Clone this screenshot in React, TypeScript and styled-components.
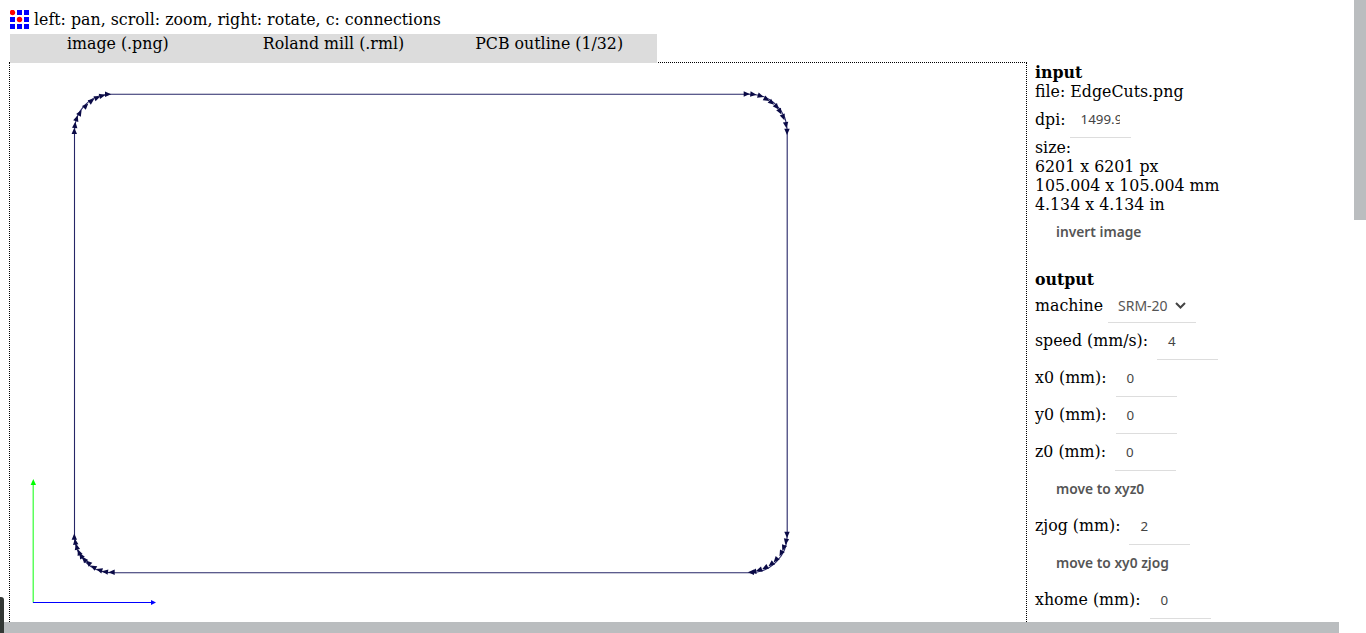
import React from 'react';
import styled, { createGlobalStyle } from 'styled-components';

const GlobalStyle = createGlobalStyle`
  html, body {
    margin: 0;
    height: 633px;
    overflow: hidden;
    background: #fff;
    font-family: "DejaVu Serif", serif;
    font-size: 15.8px;
    line-height: 18.7px;
    color: #000;
  }
`;

const Page = styled.div`
  width: 1366px;
  height: 633px;
  padding: 10px 0 0 10px;
  box-sizing: border-box;
  overflow: hidden;
`;

const Hint = styled.div`
  display: flex;
  align-items: flex-start;
  gap: 5px;
  height: 19px;
  margin-bottom: 5px;
`;

const HintText = styled.span`
  padding-top: 0.5px;
`;

const Tabs = styled.div`
  position: relative;
  display: grid;
  grid-template-columns: repeat(3, 215.67px);
  width: 647px;
  height: 29px;
  background: #dcdcdc;
`;

const Tab = styled.div`
  padding-top: 0.5px;
  text-align: center;
`;

const Workspace = styled.div`
  display: flex;
  align-items: flex-start;
`;

const Stage = styled.div`
  width: 1016px;
  height: 570px;
  flex: none;
  border-left: 1px dotted #000;
  border-right: 1px dotted #000;
  margin-top: -1px;
  margin-left: -1px;
  background-image: linear-gradient(to right, #000 50%, transparent 50%);
  background-size: 2px 1px;
  background-repeat: repeat-x;
`;

const Drawing = styled.svg`
  display: block;
`;

const Side = styled.div`
  margin-left: 8px;
  padding-top: 1px;
  width: 310px;
  flex: none;
`;

const Group = styled.div`
  margin-bottom: 20px;
`;

const Heading = styled.div`
  font-weight: bold;
`;

const Line = styled.div``;

const Field = styled.div`
  display: flex;
  align-items: center;
  height: 37px;
`;

const DpiField = styled(Field)`
  margin-bottom: 1px;
`;

const MachineField = styled(Field)`
  height: 33px;
`;

const Value = styled.div`
  width: 61px;
  height: 100%;
  margin-left: 9px;
  box-sizing: border-box;
  border-bottom: 1px solid #ddd;
  padding: 0 0 0 11px;
  display: flex;
  align-items: center;
  overflow: hidden;
  font-family: "Noto Sans", sans-serif;
  font-size: 13.33px;
  color: #444;
`;

const DpiValue = styled(Value)`
  margin-left: 4px;
`;

const Clip = styled.span`
  display: block;
  width: 39px;
  overflow: hidden;
  white-space: nowrap;
`;

const Picker = styled(Value)`
  width: 88px;
  margin-left: 5px;
  gap: 7px;
  padding-left: 10px;
  font-size: 14px;
  color: #555;
`;

const Action = styled.div`
  height: 37px;
  padding-left: 21px;
  display: flex;
  align-items: center;
  font-family: "Noto Sans", sans-serif;
  font-size: 13.8px;
  font-weight: 600;
  color: #555;
`;

const Bar = styled.div`
  position: fixed;
  background: #babdbf;
`;

const VerticalBar = styled(Bar)`
  top: 0;
  right: 0;
  width: 12px;
  height: 220px;
`;

const HorizontalBar = styled(Bar)`
  left: 4px;
  bottom: 0;
  width: 1335px;
  height: 11px;
`;

const Corner = styled.div`
  position: fixed;
  left: 0;
  bottom: 0;
  width: 4px;
  height: 36px;
  background: #333835;
  border-radius: 0 3px 0 0;
`;

type Arrow = [number, number, number];

const arrows: Arrow[] = [
  [74.3, 131, -90], [75, 125, -84], [76.7, 118.3, -72], [80, 112.7, -60], [86, 105.7, -45],
  [91.7, 100.7, -35], [97.3, 97.7, -22], [102.3, 95.7, -14], [108, 94.3, 0],
  [746.7, 94, 0], [753.3, 94.3, 6], [760.7, 96, 18], [766.7, 99.3, 30], [771.7, 102.7, 40],
  [776.7, 107, 52], [780, 111.7, 62], [783.3, 117.3, 70], [786, 125, 82], [787, 131.7, 90],
  [787, 534.7, 90], [786, 541.7, 100], [783.5, 548, 110], [781, 553.3, 118], [775.7, 560, 132],
  [771, 564.3, 142], [765, 567.7, 152], [759, 570, 162], [753.3, 571.7, 172], [751, 572.3, 180],
  [111.7, 572.3, 180], [105, 571.7, 188], [99.3, 570, 198], [93.3, 567, 210], [88.3, 562.7, 222],
  [84.3, 559.3, 232], [81, 555.5, 240], [79, 552.3, 248], [76.7, 546.7, 256], [75.3, 541.7, 262],
  [74.3, 536.7, 270],
];

const Logo = () => (
  <svg width="19" height="19" viewBox="0 0 19 19">
    {[0, 7, 14].map((y) =>
      [0, 7, 14].map((x) =>
        (x === 0 && y === 0) || (x === 7 && y === 7) ? (
          <circle key={`${x}-${y}`} cx={x + 2.5} cy={y + 2.5} r="2.7" fill="#f00" />
        ) : (
          <rect key={`${x}-${y}`} x={x} y={y} width="5" height="5" fill="#00f" />
        ),
      ),
    )}
  </svg>
);

const Chevron = () => (
  <svg width="11" height="7" viewBox="0 0 11 7">
    <path d="M1 1l4.5 4.5L10 1" fill="none" stroke="#444" strokeWidth="2" />
  </svg>
);

const Board = () => (
  <Drawing width="1016" height="570" viewBox="10 62 1016 570">
    <path
      d="M74.5 131A35 37 0 0 1 108 94.2H750A37 37 0 0 1 787.2 131V535A37 37 0 0 1 750 572.7H111A37 37 0 0 1 74.5 536Z"
      fill="none"
      stroke="#00004e"
      strokeOpacity="0.85"
      strokeWidth="1.1"
    />
    {arrows.map(([x, y, a], i) => (
      <polygon key={i} points="-3,-2.7 3.2,0 -3,2.7" fill="#0a0a46" transform={`translate(${x} ${y}) rotate(${a})`} />
    ))}
    <path d="M33.2 602.5V482" stroke="#00ff00" strokeWidth="1.2" strokeOpacity="0.8" fill="none" />
    <polygon points="33.3,479 36,485 30.6,485" fill="#00ff00" />
    <path d="M33 602.5H152" stroke="#0000ff" fill="none" />
    <polygon points="156,602.5 151,600 151,605" fill="#0000ff" />
  </Drawing>
);

export default function App() {
  return (
    <Page>
      <GlobalStyle />
      <Hint>
        <Logo />
        <HintText>left: pan, scroll: zoom, right: rotate, c: connections</HintText>
      </Hint>
      <Tabs>
        <Tab>image (.png)</Tab>
        <Tab>Roland mill (.rml)</Tab>
        <Tab>PCB outline (1/32)</Tab>
      </Tabs>
      <Workspace>
        <Stage>
          <Board />
        </Stage>
        <Side>
          <Group>
            <Heading>input</Heading>
            <Line>file: EdgeCuts.png</Line>
            <DpiField>
              dpi:
              <DpiValue>
                <Clip>1499.9</Clip>
              </DpiValue>
            </DpiField>
            <Line>size:</Line>
            <Line>6201 x 6201 px</Line>
            <Line>105.004 x 105.004 mm</Line>
            <Line>4.134 x 4.134 in</Line>
            <Action>invert image</Action>
          </Group>
          <Group>
            <Heading>output</Heading>
            <MachineField>
              machine
              <Picker>
                SRM-20 <Chevron />
              </Picker>
            </MachineField>
            <Field>
              speed (mm/s):
              <Value>4</Value>
            </Field>
            <Field>
              x0 (mm):
              <Value>0</Value>
            </Field>
            <Field>
              y0 (mm):
              <Value>0</Value>
            </Field>
            <Field>
              z0 (mm):
              <Value>0</Value>
            </Field>
            <Action>move to xyz0</Action>
            <Field>
              zjog (mm):
              <Value>2</Value>
            </Field>
            <Action>move to xy0 zjog</Action>
            <Field>
              xhome (mm):
              <Value>0</Value>
            </Field>
          </Group>
        </Side>
      </Workspace>
      <VerticalBar />
      <HorizontalBar />
      <Corner />
    </Page>
  );
}
